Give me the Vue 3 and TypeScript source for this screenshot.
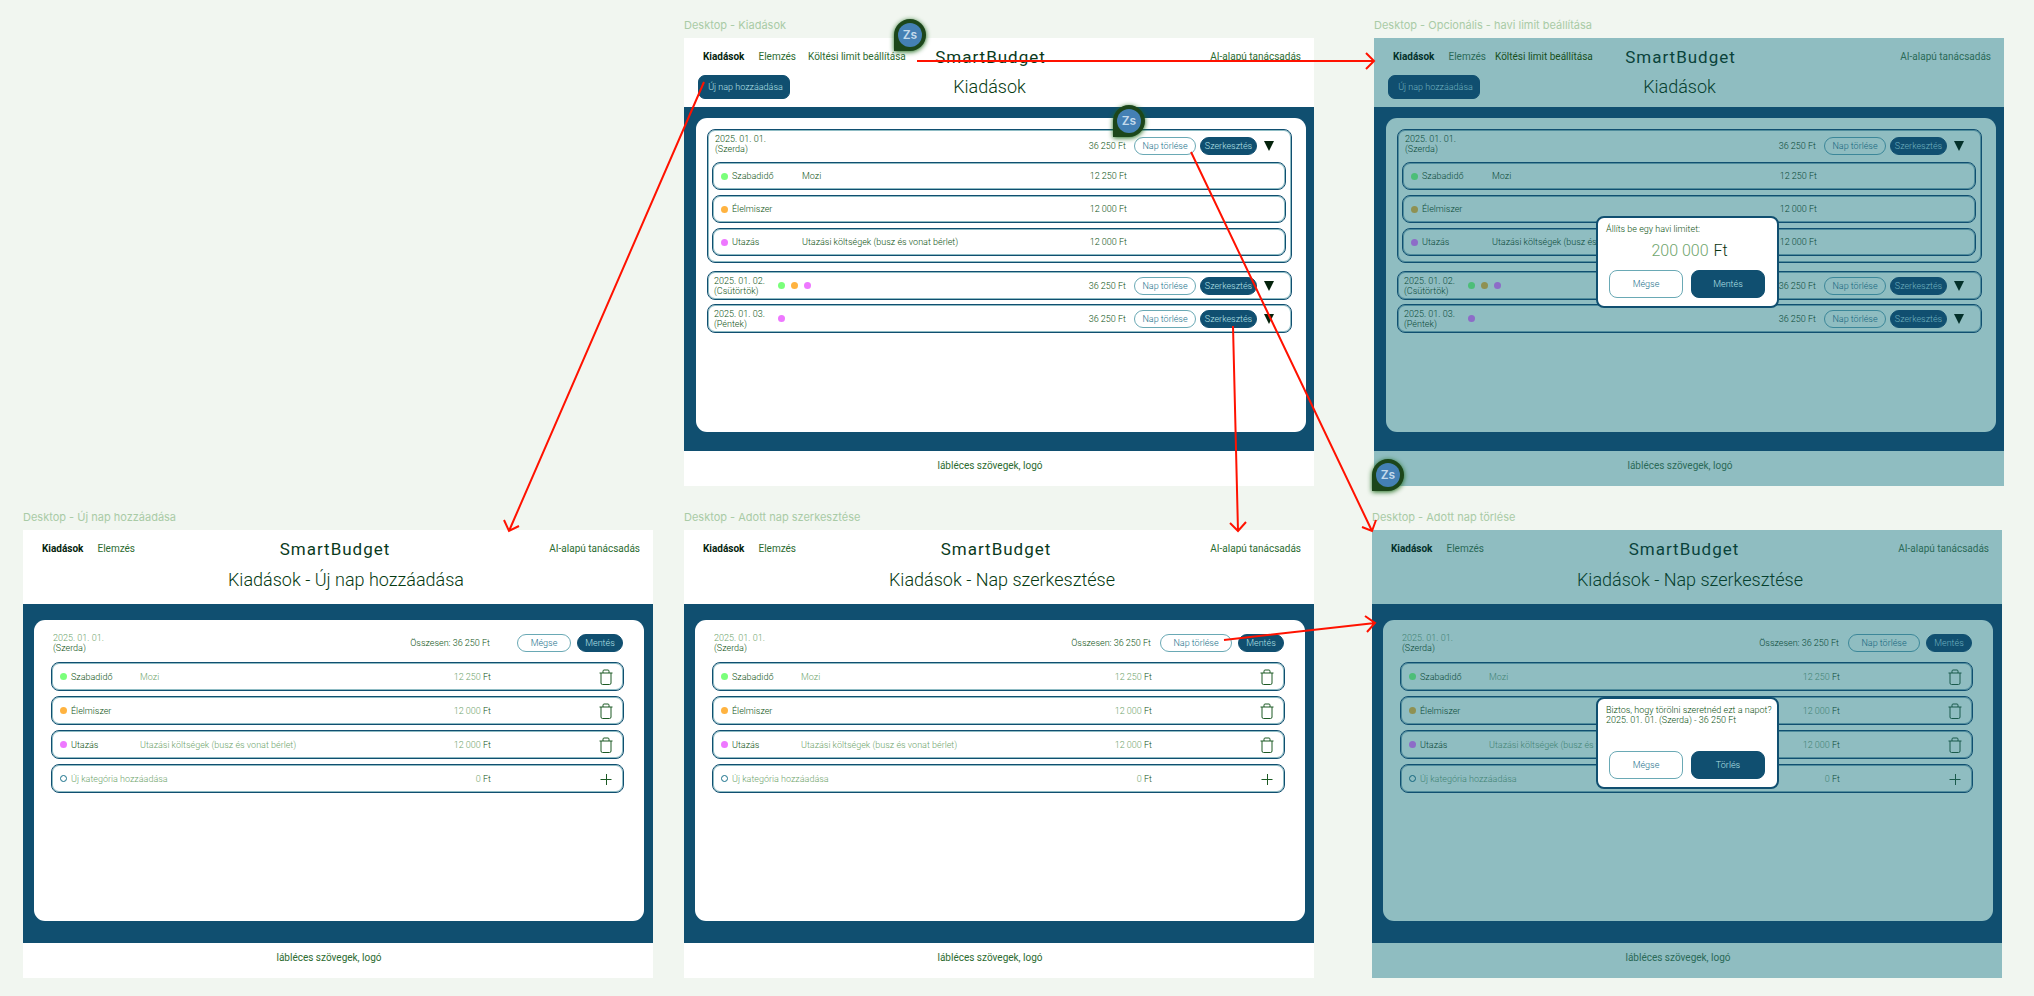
<script setup lang="ts">
interface Item {
  color: string
  name: string
  note: string
  amount: string
}

interface Day {
  date: string
  weekday: string
  dots: string[]
  items: Item[]
}

interface Frame {
  id: string
  label: string
  x: number
  y: number
  kind: 'overview' | 'editor'
  title: string
  dimmed: boolean
  cancel: string
  dialog: 'limit' | 'delete' | null
}

const items: Item[] = [
  { color: 'green', name: 'Szabadidő', note: 'Mozi', amount: '12 250' },
  { color: 'orange', name: 'Élelmiszer', note: '', amount: '12 000' },
  { color: 'pink', name: 'Utazás', note: 'Utazási költségek (busz és vonat bérlet)', amount: '12 000' },
]

const days: Day[] = [
  { date: '2025. 01. 01.', weekday: '(Szerda)', dots: [], items },
  { date: '2025. 01. 02.', weekday: '(Csütörtök)', dots: ['green', 'orange', 'pink'], items: [] },
  { date: '2025. 01. 03.', weekday: '(Péntek)', dots: ['pink'], items: [] },
]

const frames: Frame[] = [
  { id: 'list', label: 'Desktop - Kiadások', x: 684, y: 38, kind: 'overview', title: 'Kiadások', dimmed: false, cancel: '', dialog: null },
  { id: 'limit', label: 'Desktop - Opcionális - havi limit beállítása', x: 1374, y: 38, kind: 'overview', title: 'Kiadások', dimmed: true, cancel: '', dialog: 'limit' },
  { id: 'new', label: 'Desktop - Új nap hozzáadása', x: 23, y: 530, kind: 'editor', title: 'Kiadások - Új nap hozzáadása', dimmed: false, cancel: 'Mégse', dialog: null },
  { id: 'edit', label: 'Desktop - Adott nap szerkesztése', x: 684, y: 530, kind: 'editor', title: 'Kiadások - Nap szerkesztése', dimmed: false, cancel: 'Nap törlése', dialog: null },
  { id: 'delete', label: 'Desktop - Adott nap törlése', x: 1372, y: 530, kind: 'editor', title: 'Kiadások - Nap szerkesztése', dimmed: true, cancel: 'Nap törlése', dialog: 'delete' },
]

const pins = [
  { x: 894, y: 19 },
  { x: 1113, y: 105 },
  { x: 1372, y: 459 },
]

const arrows = [
  'M917 61H1374M1366 53l8 8l-8 8',
  'M704 82L509 531M504 520l5 11l10 -5',
  'M1191 152L1372 531M1362 527l10 4l4 -11',
  'M1233 326L1238 531M1230 523l8 8l8 -9',
  'M1224 640L1375 623M1365 616l10 7l-8 9',
]

const place = (p: { x: number; y: number }) => ({ left: `${p.x}px`, top: `${p.y}px` })
</script>

<template>
  <main class="board">
    <section
      v-for="f in frames"
      :key="f.id"
      class="node"
      :style="place(f)"
    >
      <h2 class="node-label">{{ f.label }}</h2>
      <article class="frame" :class="[f.kind, { dimmed: f.dimmed }]">
        <header class="top">
          <div class="bar">
            <nav class="nav">
              <a href="#kiadasok" class="current">Kiadások</a>
              <a href="#elemzes">Elemzés</a>
              <a v-if="f.kind === 'overview'" href="#limit" class="limit-link">Költési limit beállítása</a>
            </nav>
            <span class="brand">SmartBudget</span>
            <a href="#tanacs" class="advice">AI-alapú tanácsadás</a>
          </div>
          <div class="heading">
            <button v-if="f.kind === 'overview'" type="button" class="btn solid add-day">Új nap hozzáadása</button>
            <h1 class="title">{{ f.title }}</h1>
          </div>
        </header>

        <div class="stage">
          <div v-if="f.kind === 'overview'" class="panel">
            <section v-for="d in days" :key="d.date" class="day outlined" :class="{ open: d.items.length }">
              <div class="day-head">
                <p class="date">{{ d.date }}<br />{{ d.weekday }}</p>
                <span class="dots"><i v-for="c in d.dots" :key="c" class="dot" :class="c"></i></span>
                <span class="sum">36 250 Ft</span>
                <button type="button" class="btn ghost remove">Nap törlése</button>
                <button type="button" class="btn solid edit">Szerkesztés</button>
                <button type="button" class="icon-btn toggle" aria-label="Részletek">
                  <svg width="10" height="10" viewBox="0 0 10 10"><path d="M0 0H10L5 10Z" /></svg>
                </button>
              </div>
              <ul v-if="d.items.length" class="items">
                <li v-for="it in d.items" :key="it.name" class="item outlined">
                  <i class="dot" :class="it.color"></i>
                  <span class="name">{{ it.name }}</span>
                  <span class="note">{{ it.note }}</span>
                  <span class="sum">{{ it.amount }} Ft</span>
                </li>
              </ul>
            </section>
          </div>

          <form v-else class="panel" @submit.prevent>
            <div class="edit-head">
              <p class="date">
                <input class="field" type="text" value="2025. 01. 01." aria-label="Dátum" />
                (Szerda)
              </p>
              <span class="total">Összesen: 36 250 Ft</span>
              <div class="actions">
                <button type="button" class="btn ghost" :class="{ wide: f.cancel !== 'Mégse' }">{{ f.cancel }}</button>
                <button type="submit" class="btn solid save">Mentés</button>
              </div>
            </div>
            <ul class="items">
              <li v-for="it in items" :key="it.name" class="item outlined">
                <i class="dot" :class="it.color"></i>
                <span class="name">{{ it.name }}</span>
                <input class="field" type="text" :value="it.note" :aria-label="`${it.name} megjegyzés`" />
                <label class="sum"><input class="field money" type="text" :value="it.amount" :aria-label="`${it.name} összeg`" />&nbsp;Ft</label>
                <button type="button" class="icon-btn" :aria-label="`${it.name} törlése`">
                  <svg width="14" height="16" viewBox="0 0 14 16" class="line">
                    <path d="M0.5 4H13.5M4 4V2.2Q4 1 5 1H9Q10 1 10 2.2V4M2 4V14Q2 15.5 3.5 15.5H10.5Q12 15.5 12 14V4" />
                  </svg>
                </button>
              </li>
              <li class="item outlined fresh">
                <i class="dot hollow"></i>
                <input class="field" type="text" value="Új kategória hozzáadása" aria-label="Új kategória neve" />
                <label class="sum"><input class="field money" type="text" value="0" aria-label="Új kategória összege" />&nbsp;Ft</label>
                <button type="button" class="icon-btn" aria-label="Hozzáadás">
                  <svg width="14" height="16" viewBox="0 0 14 16" class="line"><path d="M1.5 8.5H12.5M7.5 3V14" /></svg>
                </button>
              </li>
            </ul>
          </form>
        </div>

        <footer class="foot">lábléces szövegek, logó</footer>
      </article>

      <div v-if="f.dialog" class="dialog" :class="f.dialog" role="dialog" :aria-label="f.label">
        <label v-if="f.dialog === 'limit'" class="dialog-text">
          Állíts be egy havi limitet:
          <span class="limit-value"><input class="field" type="text" value="200 000" /><b>Ft</b></span>
        </label>
        <p v-else class="dialog-text">Biztos, hogy törölni szeretnéd ezt a napot?<br />2025. 01. 01. (Szerda) - 36 250 Ft</p>
        <div class="dialog-actions">
          <button type="button" class="btn ghost">Mégse</button>
          <button type="button" class="btn solid">{{ f.dialog === 'limit' ? 'Mentés' : 'Törlés' }}</button>
        </div>
      </div>
    </section>

    <svg class="arrows" aria-hidden="true">
      <path v-for="a in arrows" :key="a" :d="a" />
    </svg>

    <span v-for="p in pins" :key="p.x" class="pin" :style="place(p)"><span>Zs</span></span>
  </main>
</template>

<style>
body {
  margin: 0;
  background: #f1f6f0;
}
</style>

<style scoped>
.board {
  position: relative;
  min-height: 100vh;
  overflow: hidden;
  background: #f1f6f0;
  font-family: Roboto, "Liberation Sans", sans-serif;
  font-weight: 300;
}

h1,
h2,
p,
ul {
  margin: 0;
  padding: 0;
  font-weight: inherit;
  list-style: none;
}

a {
  color: inherit;
  text-decoration: none;
}

.node {
  position: absolute;
  width: 630px;
}

.node-label {
  position: absolute;
  bottom: 100%;
  left: 0;
  padding-bottom: 6px;
  color: #a9cba6;
  font: 400 11px/14px Inter, sans-serif;
  white-space: nowrap;
}

.frame {
  --paper: #ffffff;
  --navy: #104f70;
  --halo: #8fbcc4;
  --ink: #0c5212;
  --nav: #2c6b30;
  --strong: #04230c;
  --brand: #0a3a1c;
  --title: #063a12;
  --muted: #6fa56d;
  --teal: #17708a;
  --teal-line: #6aa9b5;
  --on-navy: #b4e0e6;
  --green: #7aff7a;
  --orange: #ffb340;
  --pink: #ee78ff;
  background: var(--paper);
  color: var(--ink);
}

.frame.dimmed {
  --paper: #8fbdc1;
  --halo: #4f8c9c;
  --ink: #0a4a38;
  --nav: #2b6a58;
  --strong: #03302a;
  --brand: #0a433b;
  --title: #06402f;
  --muted: #438475;
  --teal: #14657e;
  --teal-line: #3c8799;
  --on-navy: #6fb0bf;
  --green: #4cbe78;
  --orange: #8f9152;
  --pink: #8d6cc8;
}

.top {
  box-sizing: border-box;
  height: 74px;
  padding: 8px 27px 0 19px;
}

.overview .top {
  height: 69px;
  padding-left: 14px;
}

.bar {
  display: grid;
  grid-template-columns: 1fr auto 1fr;
  align-items: center;
  height: 22px;
  color: var(--nav);
  font-size: 10px;
  font-weight: 400;
  line-height: 20px;
}

.nav {
  display: flex;
  gap: 12px;
}

.overview .nav {
  padding-left: 5px;
}

.current {
  margin-right: 2px;
  color: var(--strong);
  font-weight: 700;
}

.dimmed .limit-link {
  margin-left: -3px;
  color: #17501c;
}

.brand {
  padding-left: 2px;
  color: var(--brand);
  font-size: 17px;
  letter-spacing: 1px;
}

.overview .brand {
  padding: 0 4px 0 0;
}

.advice {
  justify-self: end;
  margin-right: -14px;
}

.heading {
  display: flex;
  align-items: center;
  height: 30px;
  margin-top: 5px;
  padding-left: 186px;
}

.title {
  color: var(--title);
  font-size: 18px;
  line-height: 24px;
}

.overview .heading {
  display: grid;
  grid-template-columns: 1fr auto 1fr;
  height: 24px;
  margin-top: 7px;
  padding: 0 6px 0 0;
}

.btn {
  box-sizing: border-box;
  height: 18px;
  padding: 0;
  border: 1px solid var(--navy);
  border-radius: 9px;
  background: transparent;
  font: inherit;
  font-size: 9px;
  line-height: 16px;
  white-space: nowrap;
  cursor: pointer;
}

.solid {
  background: var(--navy);
  color: var(--on-navy);
}

.ghost {
  border-color: var(--teal-line);
  color: var(--teal);
}

.add-day {
  justify-self: start;
  width: 92px;
  height: 24px;
  padding-left: 3px;
  border-radius: 7px;
}

.stage {
  box-sizing: border-box;
  padding: 16px 9px 22px 11px;
  background: var(--navy);
}

.overview .stage {
  padding: 11px 8px 19px 12px;
}

.panel {
  box-sizing: border-box;
  min-height: 301px;
  padding: 12px 20px 0 17px;
  border-radius: 11px;
  background: var(--paper);
  font-size: 9px;
  line-height: 10px;
}

.overview .panel {
  display: flex;
  flex-direction: column;
  gap: 4px;
  min-height: 314px;
  padding: 11px 14px 0 11px;
}

.outlined {
  box-sizing: border-box;
  border: 1px solid var(--navy);
  border-radius: 8px;
  box-shadow: inset 0 0 0 1px var(--halo);
}

.day.open {
  height: 134px;
  margin-bottom: 4px;
}

.day-head {
  display: flex;
  align-items: center;
  height: 27px;
  padding: 0 17px 0 6px;
}

.open .day-head {
  height: 32px;
  padding-left: 7px;
}

.date {
  width: 58px;
}

.open .date {
  padding-bottom: 4px;
}

.dots {
  display: flex;
  flex: 1;
  gap: 6px;
  padding-left: 6px;
}

.dot {
  flex: none;
  width: 7px;
  height: 7px;
  border-radius: 50%;
}

.green {
  background: var(--green);
}

.orange {
  background: var(--orange);
}

.pink {
  background: var(--pink);
}

.hollow {
  box-sizing: border-box;
  border: 1px solid var(--teal);
}

.sum {
  white-space: nowrap;
}

.remove {
  width: 62px;
  margin-left: 8px;
}

.edit {
  width: 57px;
  margin-left: 4px;
}

.icon-btn {
  display: flex;
  padding: 0;
  border: 0;
  background: none;
  color: #1c5a24;
  cursor: pointer;
}

.toggle {
  margin-left: 7px;
  fill: var(--strong);
}

.line {
  fill: none;
  stroke: currentColor;
  stroke-width: 1;
}

.items {
  display: flex;
  flex-direction: column;
  gap: 5px;
}

.open .items {
  padding: 0 5px 0 4px;
}

.item {
  display: grid;
  grid-template-columns: 7px 66px 1fr auto;
  column-gap: 4px;
  align-items: center;
  height: 29px;
  padding: 0 158px 0 8px;
}

.overview .item {
  height: 28px;
}

.editor .item {
  grid-template-columns: 7px 65px 1fr auto 118px;
  padding: 0 10px 0 8px;
}

.editor .fresh {
  grid-template-columns: 7px 1fr auto 118px;
}

.item .icon-btn {
  justify-self: end;
}

.dimmed .item .icon-btn {
  color: #1a5a4c;
}

.field {
  box-sizing: border-box;
  width: 100%;
  min-width: 0;
  height: 10px;
  padding: 0;
  border: 0;
  outline: 0;
  background: transparent;
  color: var(--muted);
  font: inherit;
}

.money {
  width: 40px;
  text-align: right;
}

.editor .sum {
  display: flex;
}

.edit-head {
  display: grid;
  grid-template-columns: 1fr auto 134px;
  align-items: center;
  height: 22px;
  margin-bottom: 8px;
}

.edit-head .date {
  display: flex;
  flex-direction: column;
  padding-left: 2px;
}

.actions {
  display: flex;
  justify-content: flex-end;
  gap: 6px;
  padding-right: 1px;
}

.actions .ghost {
  width: 54px;
}

.actions .wide {
  width: 72px;
}

.save {
  width: 46px;
}

.foot {
  box-sizing: border-box;
  height: 35px;
  padding-right: 18px;
  color: var(--nav);
  font-size: 10px;
  font-weight: 400;
  line-height: 29px;
  text-align: center;
}

.dialog {
  --navy: #104f70;
  --ink: #0c5212;
  --muted: #6fa56d;
  --teal: #17708a;
  --teal-line: #6aa9b5;
  --on-navy: #b4e0e6;
  position: absolute;
  top: 178px;
  left: 222px;
  box-sizing: border-box;
  display: flex;
  flex-direction: column;
  justify-content: space-between;
  width: 183px;
  height: 92px;
  padding: 6px 12px 8px 11px;
  border: 2px solid var(--navy);
  border-radius: 8px;
  background: #ffffff;
  color: var(--ink);
  font-size: 9px;
  line-height: 10px;
}

.dialog.delete {
  top: 167px;
  left: 224px;
}

.dialog-text {
  margin-left: -3px;
  white-space: nowrap;
}

.limit-value {
  display: flex;
  justify-content: center;
  gap: 2px;
  margin-top: 7px;
  padding-left: 8px;
  font-size: 16px;
  line-height: 20px;
}

.limit-value .field {
  width: 60px;
  height: 20px;
}

.limit-value b {
  color: #08340f;
  font-weight: 300;
}

.dialog-actions {
  display: grid;
  grid-template-columns: 1fr 1fr;
  gap: 8px;
}

.dialog-actions .btn {
  height: 28px;
  border-radius: 8px;
}

.arrows {
  position: absolute;
  inset: 0;
  width: 100%;
  height: 100%;
  fill: none;
  stroke: #ff1200;
  stroke-width: 2;
  pointer-events: none;
}

.pin {
  position: absolute;
  box-sizing: border-box;
  width: 32px;
  height: 32px;
  padding: 4px;
  border-radius: 50% 50% 50% 0;
  background: #1c461a;
  box-shadow: 0 1px 5px #1c6a1a;
}

.pin span {
  display: block;
  border-radius: 50%;
  background: #4480b4;
  color: #c3daec;
  font: 600 12px/24px Inter, sans-serif;
  text-align: center;
}
</style>
